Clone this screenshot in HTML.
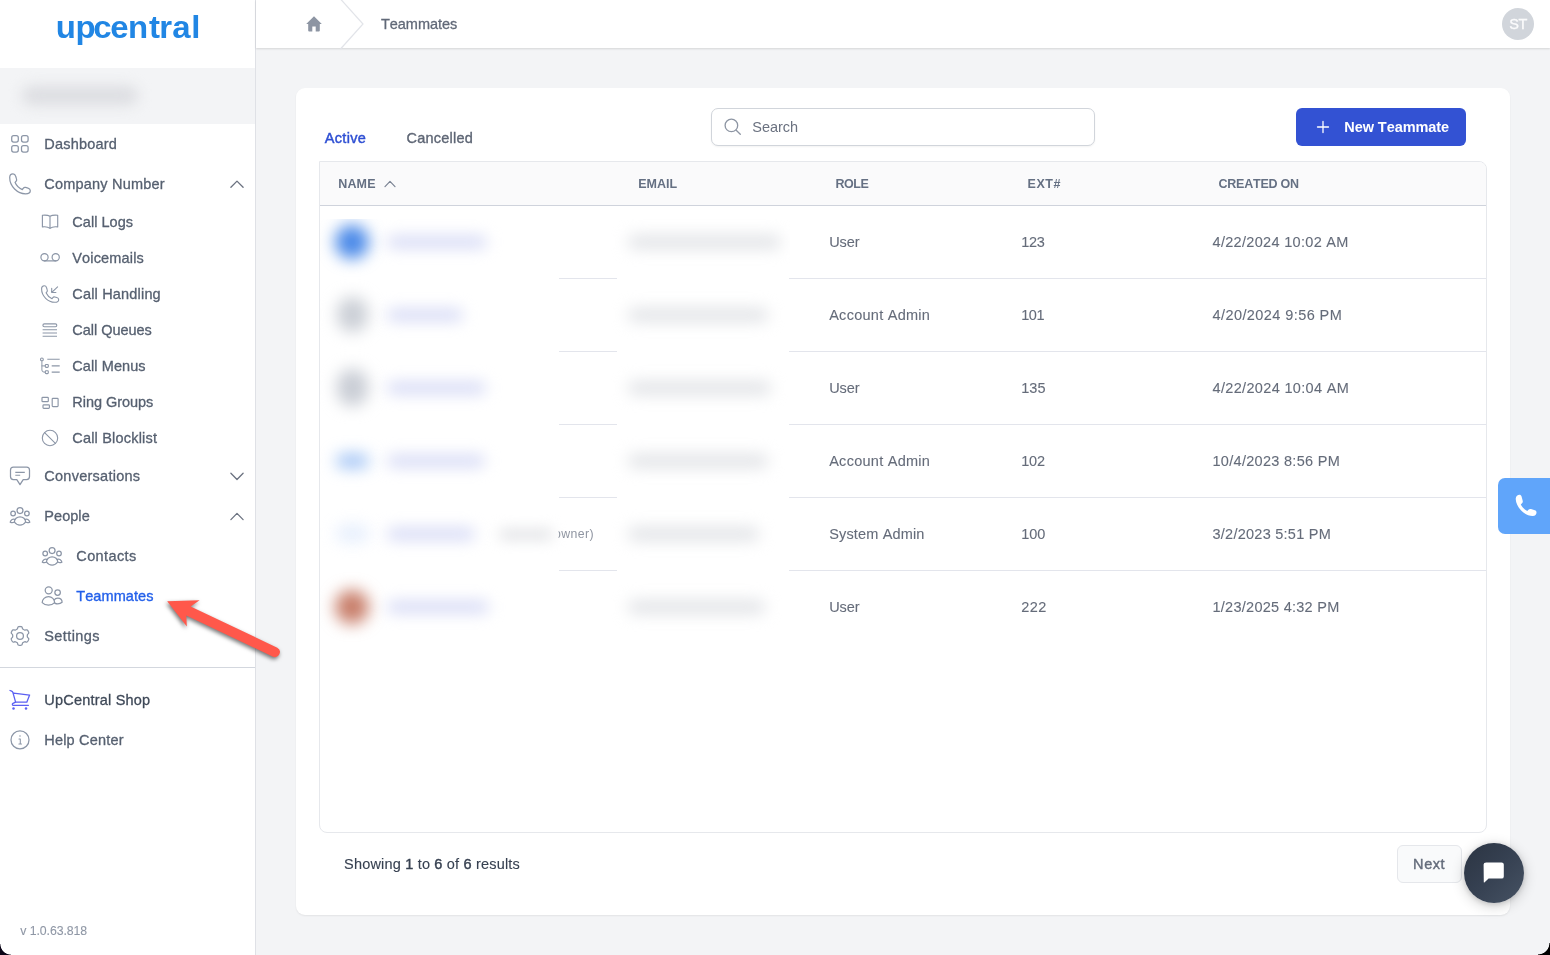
<!DOCTYPE html>
<html lang="en">
<head>
<meta charset="utf-8">
<title>Teammates - UpCentral</title>
<style>
*{box-sizing:border-box;margin:0;padding:0}
html,body{width:1550px;height:955px;overflow:hidden}
body{position:relative;background:#f3f4f6;font-family:"Liberation Sans",sans-serif;font-size:14px;color:#4b5563}
.t{font-kerning:none;position:absolute;white-space:nowrap;display:block;line-height:20px;opacity:.999}
#side{position:absolute;left:0;top:0;width:256px;height:955px;background:#fff;border-right:1px solid #dfe1e6}
#band{position:absolute;left:0;top:68px;width:255px;height:56px;background:#f3f4f6}
#sdiv{position:absolute;left:0;top:667px;width:255px;height:1px;background:#d3d7de}
#top{position:absolute;left:256px;top:0;width:1294px;height:48px;background:#fff;box-shadow:0 1px 2px rgba(0,0,0,.13)}
#card{position:absolute;left:296px;top:88px;width:1214px;height:827px;background:#fff;border-radius:9px;box-shadow:0 1px 2px rgba(0,0,0,.07)}
#tbl{position:absolute;left:319px;top:161px;width:1168px;height:672px;border:1px solid #e6e8ec;border-radius:0 8px 8px 8px;background:#fff;overflow:hidden}
#thead{position:absolute;left:0;top:0;width:100%;height:44px;background:#fafafb;border-bottom:1.4px solid #cfd3dc}
.rl{position:absolute;height:1px;background:#e3e5ec}
#search{position:absolute;left:711px;top:108px;width:384px;height:38px;border:1px solid #d1d5db;border-radius:7px;background:#fff;box-shadow:0 1px 2px rgba(0,0,0,.05)}
#btn{position:absolute;left:1296px;top:108px;width:170px;height:38px;border-radius:6px;background:#3352d3}
#next{position:absolute;left:1397px;top:845px;width:65px;height:38px;border:1px solid #e5e7eb;border-radius:6px;background:#f9fafb}
#chat{position:absolute;left:1464px;top:843px;width:60px;height:60px;border-radius:50%;background:linear-gradient(135deg,#2b3442 0%,#364152 50%,#465263 100%);box-shadow:0 3px 14px rgba(0,0,0,.2),0 1px 5px rgba(0,0,0,.14)}
#call{position:absolute;left:1498px;top:478px;width:52px;height:56px;border-radius:7px 0 0 7px;background:#60a5fa}
#ava{position:absolute;left:1502px;top:8px;width:32px;height:32px;border-radius:50%;background:#d1d5db}
.blur{position:absolute;border-radius:50%}
svg{position:absolute;overflow:visible}
.ic{fill:none;stroke:#8c96a7;stroke-width:1.25;stroke-linecap:round;stroke-linejoin:round}
.corner{position:absolute;width:12px;height:12px;bottom:0;background:#000}
.t b{font-weight:400;-webkit-text-stroke:.42px #374151}
a.t{text-decoration:none;cursor:pointer}
.redact{position:absolute;overflow:hidden}

</style>
</head>
<body>
<aside id="side">
  <svg id="logo" style="left:0;top:0;opacity:.999" width="255" height="60" viewBox="0 0 255 60"><text transform="scale(1.03,1)" x="54.21 73.32 90.65 107.04 124.24 144.57 154.71 167.23 185.62" y="38.1" font-family="Liberation Sans, sans-serif" font-weight="700" font-size="32" fill="#2186e4">upcentral</text></svg>
  <div id="band"><div class="blur" style="left:22px;top:18px;width:116px;height:19px;background:#dcdde1;filter:blur(7px);border-radius:9px"></div></div>
  <nav>
<svg style="left:0;top:0" width="256" height="955" viewBox="0 0 256 955"><rect class="ic" x="11.7" y="135.7" width="6.6" height="6.4" rx="2"/>
<rect class="ic" x="21.5" y="135.7" width="6.6" height="6.4" rx="2"/>
<rect class="ic" x="11.7" y="145.6" width="6.6" height="6.4" rx="2"/>
<rect class="ic" x="21.5" y="145.6" width="6.6" height="6.4" rx="2"/>
<g transform="translate(9,173)"><path class="ic" d="M4.0 0.9 C2.2 0.9 0.7 2.3 0.7 4.6 C0.7 9.0 2.6 13.1 5.6 16.0 C8.5 18.9 12.4 20.8 16.6 20.8 C19.4 20.8 21.3 19.6 21.3 17.7 C21.3 16.3 20.4 15.5 19.0 15.1 L16.6 14.4 C15.6 14.1 14.8 14.5 14.2 15.3 L13.3 16.6 C10.4 15.2 7.4 12.4 6.1 9.4 L6.9 8.5 C7.7 7.7 7.9 6.9 7.5 5.9 L6.6 3.0 C6.2 1.6 5.3 0.9 4.0 0.9 Z"/></g>
<path class="ic" d="M50 216.3 C48.2 215.1 45.2 214.9 42.4 215.2 V226.9 C45.2 226.5 48.2 226.9 50 228.4 C51.8 226.9 54.8 226.5 57.7 226.9 V215.2 C54.8 214.9 51.8 215.1 50 216.3 Z M50 216.3 V228.4" style="stroke-width:1.15"/>
<circle class="ic" cx="44.5" cy="257.3" r="3.6" style="stroke-width:1.2"/>
<circle class="ic" cx="55.7" cy="257.3" r="3.6" style="stroke-width:1.2"/>
<path class="ic" d="M44.5 260.9 H55.7" style="stroke-width:1.2"/>
<g transform="translate(41,285) scale(0.83)"><path class="ic" d="M4.0 0.9 C2.2 0.9 0.7 2.3 0.7 4.6 C0.7 9.0 2.6 13.1 5.6 16.0 C8.5 18.9 12.4 20.8 16.6 20.8 C19.4 20.8 21.3 19.6 21.3 17.7 C21.3 16.3 20.4 15.5 19.0 15.1 L16.6 14.4 C15.6 14.1 14.8 14.5 14.2 15.3 L13.3 16.6 C10.4 15.2 7.4 12.4 6.1 9.4 L6.9 8.5 C7.7 7.7 7.9 6.9 7.5 5.9 L6.6 3.0 C6.2 1.6 5.3 0.9 4.0 0.9 Z" style="stroke-width:1.35"/></g>
<path class="ic" d="M57.6 286.8 L51.8 292.4 M51.7 288.3 V292.5 H55.9" style="stroke-width:1.1"/>
<rect class="ic" x="42.9" y="323.9" width="13.9" height="2.9" rx="1.45" style="stroke-width:1.1"/>
<path class="ic" d="M42.6 329.7 H57 M42.6 333 H57 M42.6 336.2 H57" style="stroke-width:1.1;stroke-linecap:butt"/>
<circle class="ic" cx="41.9" cy="359.4" r="1.4" style="stroke-width:1.1"/>
<path class="ic" d="M41.9 360.8 V370 Q41.9 372.1 44 372.1 H45.2 M41.9 365.9 H45.2" style="stroke-width:1"/>
<rect class="ic" x="45.3" y="364.5" width="3" height="2.9" rx="0.8" style="stroke-width:1.1"/>
<rect class="ic" x="45.3" y="370.7" width="3" height="2.9" rx="0.8" style="stroke-width:1.1"/>
<path class="ic" d="M47.3 359.3 H59.7 M51.7 365.9 H59.7 M51.7 372.1 H59.7" style="stroke-width:1.1;stroke-linecap:butt"/>
<rect class="ic" x="42" y="397.3" width="6.3" height="4.4" rx="0.8" style="stroke-width:1.15"/>
<rect class="ic" x="43" y="404.8" width="6.4" height="3.5" rx="0.8" style="stroke-width:1.15"/>
<rect class="ic" x="52.2" y="398.3" width="5.9" height="8.3" rx="0.8" style="stroke-width:1.15"/>
<circle class="ic" cx="50" cy="438" r="7.7" style="stroke-width:1.1"/>
<path class="ic" d="M44.6 432.6 L55.4 443.4" style="stroke-width:1.1"/>
<path class="ic" d="M13.4 467.2 H26.6 C28.6 467.2 29.5 468.1 29.5 470.1 V476.6 C29.5 478.6 28.6 479.6 26.6 479.6 H23.2 L20 484.7 L16.8 479.6 H13.4 C11.4 479.6 10.5 478.6 10.5 476.6 V470.1 C10.5 468.1 11.4 467.2 13.4 467.2 Z"/>
<path class="ic" d="M15.3 472.4 H24.8 M15.3 475.2 H20.2" style="stroke-width:1.1;stroke-linecap:butt"/>
<circle class="ic" cx="20.0" cy="510.6" r="2.95"/><circle class="ic" cx="13.1" cy="513.5" r="2.3"/><circle class="ic" cx="26.9" cy="513.5" r="2.3"/><path class="ic" d="M14.4 522.0 C14.4 519.0 16.9 516.8 20.0 516.8 C23.1 516.8 25.6 519.0 25.6 522.0 C24.1 524.2 22.1 525.1 20.0 525.1 C17.9 525.1 15.9 524.2 14.4 522.0 Z"/><path class="ic" d="M14.7 519.4 C13.1 518.6 10.9 519.6 10.2 522.2 C11.7 522.9 13.2 522.8 14.4 522.0"/><path class="ic" d="M25.3 519.4 C26.9 518.6 29.1 519.6 29.8 522.2 C28.3 522.9 26.8 522.8 25.6 522.0"/>
<circle class="ic" cx="52.1" cy="550.6" r="2.95"/><circle class="ic" cx="45.2" cy="553.5" r="2.3"/><circle class="ic" cx="59.0" cy="553.5" r="2.3"/><path class="ic" d="M46.5 562.0 C46.5 559.0 49.0 556.8 52.1 556.8 C55.2 556.8 57.7 559.0 57.7 562.0 C56.2 564.2 54.2 565.1 52.1 565.1 C50.0 565.1 48.0 564.2 46.5 562.0 Z"/><path class="ic" d="M46.800000000000004 559.4 C45.2 558.6 43.0 559.6 42.300000000000004 562.2 C43.800000000000004 562.9 45.300000000000004 562.8 46.5 562.0"/><path class="ic" d="M57.400000000000006 559.4 C59.0 558.6 61.2 559.6 61.900000000000006 562.2 C60.400000000000006 562.9 58.900000000000006 562.8 57.7 562.0"/>
<circle class="ic" cx="48.7" cy="590.3" r="3.5"/>
<circle class="ic" cx="57.6" cy="592.5" r="2.75"/>
<path class="ic" d="M42.2 602.6 C42.2 599.2 45 596.7 48.5 596.7 C52 596.7 54.6 599.2 54.6 602.6 C53 604.3 50.8 605 48.5 605 C46 605 43.8 604.3 42.2 602.6 Z"/>
<path class="ic" d="M54.2 600 C54.8 598.8 56.2 598 57.8 598 C60.3 598 62.1 599.8 62.1 602.3 C60.9 603.4 59.4 603.9 57.8 603.9 C56.6 603.9 55.6 603.6 54.7 603.1"/>
<path class="ic" d="M20.00 626.49 L20.61 626.52 L21.22 626.60 L21.81 626.81 L22.24 627.52 L22.48 628.59 L22.83 629.08 L23.24 629.33 L23.65 629.57 L24.07 629.81 L24.50 630.04 L25.09 630.10 L26.13 629.77 L26.97 629.79 L27.44 630.19 L27.82 630.68 L28.15 631.20 L28.43 631.74 L28.67 632.31 L28.77 632.92 L28.38 633.66 L27.57 634.39 L27.32 634.94 L27.30 635.42 L27.31 635.90 L27.30 636.38 L27.32 636.86 L27.57 637.41 L28.38 638.14 L28.77 638.88 L28.67 639.49 L28.43 640.06 L28.15 640.60 L27.82 641.12 L27.44 641.61 L26.97 642.01 L26.13 642.03 L25.09 641.70 L24.50 641.76 L24.07 641.99 L23.65 642.23 L23.24 642.47 L22.83 642.72 L22.48 643.21 L22.24 644.28 L21.81 644.99 L21.22 645.20 L20.61 645.28 L20.00 645.31 L19.39 645.28 L18.78 645.20 L18.19 644.99 L17.76 644.28 L17.52 643.21 L17.17 642.72 L16.76 642.47 L16.35 642.23 L15.93 641.99 L15.50 641.76 L14.91 641.70 L13.87 642.03 L13.03 642.01 L12.56 641.61 L12.18 641.12 L11.85 640.60 L11.57 640.06 L11.33 639.49 L11.23 638.88 L11.62 638.14 L12.43 637.41 L12.68 636.86 L12.70 636.38 L12.69 635.90 L12.70 635.42 L12.68 634.94 L12.43 634.39 L11.62 633.66 L11.23 632.92 L11.33 632.31 L11.57 631.74 L11.85 631.20 L12.18 630.68 L12.56 630.19 L13.03 629.79 L13.87 629.77 L14.91 630.10 L15.50 630.04 L15.93 629.81 L16.35 629.57 L16.76 629.33 L17.17 629.08 L17.52 628.59 L17.76 627.52 L18.19 626.81 L18.78 626.60 L19.39 626.52 L20.00 626.49 Z"/>
<circle class="ic" cx="20" cy="635.9" r="3.4"/>
<path class="ic" d="M10 690.5 L11.6 691.1 C12.4 691.4 12.8 691.9 13 692.8 L15.6 702.2 H26.8 L29.6 695.1 L13.6 693.1" style="stroke:#5c60f2;stroke-width:1.3"/>
<path class="ic" d="M15.6 702.2 L13 703.4 C12 703.9 12.2 705.3 13.4 705.3 H28.4" style="stroke:#5c60f2;stroke-width:1.3"/>
<circle class="ic" cx="13.5" cy="708.4" r="1.25" style="stroke:none;fill:#5c60f2"/>
<circle class="ic" cx="26" cy="708.4" r="1.25" style="stroke:none;fill:#5c60f2"/>
<circle class="ic" cx="20" cy="739.9" r="9"/>
<circle class="ic" cx="20" cy="736.1" r="0.75" style="stroke:none;fill:#8c96a7"/>
<path class="ic" d="M19 738.9 H20.3 V743.7 M18.9 743.9 H21.5" style="stroke-width:1.05"/>
<path class="ic" d="M230.9 187.3 L237 181.1 L243.1 187.3" style="stroke:#6b7280;stroke-width:1.3"/>
<path class="ic" d="M230.9 473.3 L237 479.5 L243.1 473.3" style="stroke:#6b7280;stroke-width:1.3"/>
<path class="ic" d="M230.9 519.6 L237 513.4 L243.1 519.6" style="stroke:#6b7280;stroke-width:1.3"/></svg>
<a class="t" style="left:44.3px;top:134px;font-size:14.5px;color:#566070;letter-spacing:0.194px;-webkit-text-stroke:0.3px #566070;">Dashboard</a>
<a class="t" style="left:44.3px;top:174px;font-size:14.5px;color:#566070;letter-spacing:0.203px;-webkit-text-stroke:0.3px #566070;">Company Number</a>
<a class="t" style="left:72.3px;top:212px;font-size:14.5px;color:#566070;letter-spacing:0.041px;-webkit-text-stroke:0.3px #566070;">Call Logs</a>
<a class="t" style="left:72.3px;top:248px;font-size:14.5px;color:#566070;letter-spacing:0.152px;-webkit-text-stroke:0.3px #566070;">Voicemails</a>
<a class="t" style="left:72.3px;top:284px;font-size:14.5px;color:#566070;letter-spacing:0.179px;-webkit-text-stroke:0.3px #566070;">Call Handling</a>
<a class="t" style="left:72.3px;top:320px;font-size:14.5px;color:#566070;letter-spacing:-0.022px;-webkit-text-stroke:0.3px #566070;">Call Queues</a>
<a class="t" style="left:72.3px;top:356px;font-size:14.5px;color:#566070;letter-spacing:0.083px;-webkit-text-stroke:0.3px #566070;">Call Menus</a>
<a class="t" style="left:72.3px;top:392px;font-size:14.5px;color:#566070;letter-spacing:-0.043px;-webkit-text-stroke:0.3px #566070;">Ring Groups</a>
<a class="t" style="left:72.3px;top:428px;font-size:14.5px;color:#566070;letter-spacing:0.190px;-webkit-text-stroke:0.3px #566070;">Call Blocklist</a>
<a class="t" style="left:44.3px;top:466px;font-size:14.5px;color:#566070;letter-spacing:0.257px;-webkit-text-stroke:0.3px #566070;">Conversations</a>
<a class="t" style="left:44.3px;top:506px;font-size:14.5px;color:#566070;letter-spacing:0.049px;-webkit-text-stroke:0.3px #566070;">People</a>
<a class="t" style="left:76.3px;top:546px;font-size:14.5px;color:#566070;letter-spacing:0.393px;-webkit-text-stroke:0.3px #566070;">Contacts</a>
<a class="t" style="left:76.3px;top:586px;font-size:14.5px;color:#2360ea;letter-spacing:0.075px;-webkit-text-stroke:0.35px #2360ea;">Teammates</a>
<a class="t" style="left:44.3px;top:626px;font-size:14.5px;color:#566070;letter-spacing:0.397px;-webkit-text-stroke:0.3px #566070;">Settings</a>
<a class="t" style="left:44.3px;top:690px;font-size:14.5px;color:#3f4958;letter-spacing:0.207px;-webkit-text-stroke:0.3px #3f4958;">UpCentral Shop</a>
<a class="t" style="left:44.3px;top:730px;font-size:14.5px;color:#566070;letter-spacing:0.182px;-webkit-text-stroke:0.3px #566070;">Help Center</a>
  </nav>
  <div id="sdiv"></div>
<span class="t" style="left:20.3px;top:921px;font-size:12.3px;color:#8f97a5;letter-spacing:-0.075px;-webkit-text-stroke:0.1px #8f97a5;">v 1.0.63.818</span>
</aside>
<header>
  <div id="top">
    <svg style="left:84px;top:0" width="26" height="48" viewBox="0 0 26 48"><path d="M0.5 -1 L23 24 L0.5 49" fill="none" stroke="#e2e4e9" stroke-width="1.2"/></svg>
    <svg style="left:50px;top:16px" width="16" height="16" viewBox="0 0 16 16"><path d="M8 0.3 L0.2 8.1 H2.2 V14.6 Q2.2 15.6 3.2 15.6 H6.3 V10.6 H9.7 V15.6 H12.8 Q13.8 15.6 13.8 14.6 V8.1 H15.8 Z" fill="#8d95a3"/></svg>
  </div>
<span class="t" style="left:380.9px;top:14px;font-size:14.5px;color:#616978;letter-spacing:-0.009px;-webkit-text-stroke:0.3px #616978;">Teammates</span>
  <div id="ava"></div>
<span class="t" style="left:1509.2px;top:14px;font-size:14.5px;color:#fbfbfc;letter-spacing:-0.400px;-webkit-text-stroke:0.3px #fbfbfc;">ST</span>
</header>
<main>
  <section id="card"></section>
  <div class="tabs">
<a class="t" style="left:324.7px;top:128px;font-size:14.5px;color:#2e4fd3;letter-spacing:0.347px;-webkit-text-stroke:0.45px #2e4fd3;">Active</a>
<a class="t" style="left:406.6px;top:128px;font-size:14.5px;color:#5e6675;letter-spacing:0.222px;-webkit-text-stroke:0.35px #5e6675;">Cancelled</a>
  </div>
  <div id="search">
    <svg style="left:11.2px;top:8.2px" width="20" height="20" viewBox="0 0 20 20"><circle cx="8.4" cy="8.4" r="6.3" class="ic" style="stroke:#8d95a3;stroke-width:1.3"/><path d="M13.2 13.2 L17.3 17.3" class="ic" style="stroke:#8d95a3;stroke-width:1.3"/></svg>
  </div>
<span class="t" style="left:752.3px;top:117px;font-size:14.5px;color:#6b7280;letter-spacing:-0.040px;">Search</span>
  <div id="btn">
    <svg style="left:21px;top:13px" width="12" height="12" viewBox="0 0 12 12"><path d="M6 0.5 V11.5 M0.5 6 H11.5" stroke="#fff" stroke-width="1.3" fill="none" stroke-linecap="round"/></svg>
  </div>
<span class="t" style="left:1344.3px;top:117px;font-size:14.5px;color:#ffffff;font-weight:700;letter-spacing:-0.070px;">New Teammate</span>
  <div id="tbl"><div id="thead"></div></div>
  <div class="thead">
<span class="t" style="left:338.3px;top:174px;font-size:12.5px;color:#657083;font-weight:700;letter-spacing:0.128px;">NAME</span>
<span class="t" style="left:638.2px;top:174px;font-size:12.5px;color:#657083;font-weight:700;">EMAIL</span>
<span class="t" style="left:835.4px;top:174px;font-size:12.5px;color:#657083;font-weight:700;letter-spacing:-0.400px;">ROLE</span>
<span class="t" style="left:1027.6px;top:174px;font-size:12.5px;color:#657083;font-weight:700;letter-spacing:0.513px;">EXT#</span>
<span class="t" style="left:1218.5px;top:174px;font-size:12.5px;color:#657083;font-weight:700;letter-spacing:-0.233px;">CREATED ON</span>
    <svg style="left:384px;top:180px" width="12" height="8" viewBox="0 0 12 8"><path d="M1 6.6 L6 1.4 L11 6.6" fill="none" stroke="#7b8494" stroke-width="1.2" stroke-linecap="round" stroke-linejoin="round"/></svg>
  </div>
  <div class="tbody">
<div class="rl" style="left:559px;top:278px;width:58px"></div>
<div class="rl" style="left:789px;top:278px;width:697px"></div>
<div class="rl" style="left:559px;top:351px;width:58px"></div>
<div class="rl" style="left:789px;top:351px;width:697px"></div>
<div class="rl" style="left:559px;top:424px;width:58px"></div>
<div class="rl" style="left:789px;top:424px;width:697px"></div>
<div class="rl" style="left:559px;top:497px;width:58px"></div>
<div class="rl" style="left:789px;top:497px;width:697px"></div>
<div class="rl" style="left:559px;top:570px;width:58px"></div>
<div class="rl" style="left:789px;top:570px;width:697px"></div>
<div class="redact" style="left:320px;top:219px;width:470px;height:440px"><div class="blur" style="left:15px;top:5.7px;width:34px;height:34px;background:#4a89e8;filter:blur(8px);border-radius:17.0px"></div>
<div class="blur" style="left:67px;top:17px;width:100px;height:12px;background:#d5d9f5;filter:blur(7.5px);border-radius:6.0px"></div>
<div class="blur" style="left:308px;top:17px;width:153px;height:12px;background:#dddfe3;filter:blur(8px);border-radius:6.0px"></div>
<div class="blur" style="left:16.5px;top:78.2px;width:31px;height:35px;background:#cbcfd6;filter:blur(8px);border-radius:17.5px"></div>
<div class="blur" style="left:67px;top:90px;width:76px;height:12px;background:#d5d9f5;filter:blur(7.5px);border-radius:6.0px"></div>
<div class="blur" style="left:308px;top:90px;width:140px;height:12px;background:#dddfe3;filter:blur(8px);border-radius:6.0px"></div>
<div class="blur" style="left:16.5px;top:150.2px;width:31px;height:37px;background:#c9cdd5;filter:blur(8px);border-radius:18.5px"></div>
<div class="blur" style="left:67px;top:163px;width:99px;height:12px;background:#d5d9f5;filter:blur(7.5px);border-radius:6.0px"></div>
<div class="blur" style="left:308px;top:163px;width:143px;height:12px;background:#dddfe3;filter:blur(8px);border-radius:6.0px"></div>
<div class="blur" style="left:15.5px;top:234.7px;width:33px;height:14px;background:#9fc2f5;filter:blur(8px);border-radius:7.0px"></div>
<div class="blur" style="left:67px;top:236px;width:98px;height:12px;background:#d5d9f5;filter:blur(7.5px);border-radius:6.0px"></div>
<div class="blur" style="left:308px;top:236px;width:140px;height:12px;background:#dddfe3;filter:blur(8px);border-radius:6.0px"></div>
<div class="blur" style="left:15.5px;top:306.2px;width:33px;height:17px;background:#dfeafc;filter:blur(8px);border-radius:8.5px;opacity:0.8"></div>
<div class="blur" style="left:67px;top:309px;width:88px;height:12px;background:#d5d9f5;filter:blur(7.5px);border-radius:6.0px"></div>
<div class="blur" style="left:308px;top:309px;width:131px;height:12px;background:#dddfe3;filter:blur(8px);border-radius:6.0px"></div>
<div class="blur" style="left:15px;top:370.7px;width:34px;height:34px;background:#c87e6a;filter:blur(8px);border-radius:17.0px"></div>
<div class="blur" style="left:67px;top:382px;width:102px;height:12px;background:#d5d9f5;filter:blur(7.5px);border-radius:6.0px"></div>
<div class="blur" style="left:308px;top:382px;width:137px;height:12px;background:#dddfe3;filter:blur(8px);border-radius:6.0px"></div>
<div class="blur" style="left:179px;top:309.5px;width:54px;height:11px;background:#e2e3e6;filter:blur(7px);border-radius:5.5px"></div></div>
<span class="t" style="left:829.2px;top:232px;font-size:14.5px;color:#656c7a;letter-spacing:-0.041px;-webkit-text-stroke:0.1px #656c7a;">User</span>
<span class="t" style="left:1021.2px;top:232px;font-size:14.5px;color:#656c7a;letter-spacing:-0.253px;-webkit-text-stroke:0.1px #656c7a;">123</span>
<span class="t" style="left:1212.5px;top:232px;font-size:14.5px;color:#656c7a;letter-spacing:0.314px;-webkit-text-stroke:0.1px #656c7a;">4/22/2024 10:02 AM</span>
<span class="t" style="left:829.2px;top:305px;font-size:14.5px;color:#656c7a;letter-spacing:0.264px;-webkit-text-stroke:0.1px #656c7a;">Account Admin</span>
<span class="t" style="left:1021.2px;top:305px;font-size:14.5px;color:#656c7a;letter-spacing:-0.400px;-webkit-text-stroke:0.1px #656c7a;">101</span>
<span class="t" style="left:1212.5px;top:305px;font-size:14.5px;color:#656c7a;letter-spacing:0.419px;-webkit-text-stroke:0.1px #656c7a;">4/20/2024 9:56 PM</span>
<span class="t" style="left:829.2px;top:378px;font-size:14.5px;color:#656c7a;letter-spacing:-0.041px;-webkit-text-stroke:0.1px #656c7a;">User</span>
<span class="t" style="left:1021.2px;top:378px;font-size:14.5px;color:#656c7a;letter-spacing:0.033px;-webkit-text-stroke:0.1px #656c7a;">135</span>
<span class="t" style="left:1212.5px;top:378px;font-size:14.5px;color:#656c7a;letter-spacing:0.338px;-webkit-text-stroke:0.1px #656c7a;">4/22/2024 10:04 AM</span>
<span class="t" style="left:829.2px;top:451px;font-size:14.5px;color:#656c7a;letter-spacing:0.264px;-webkit-text-stroke:0.1px #656c7a;">Account Admin</span>
<span class="t" style="left:1021.2px;top:451px;font-size:14.5px;color:#656c7a;letter-spacing:-0.207px;-webkit-text-stroke:0.1px #656c7a;">102</span>
<span class="t" style="left:1212.5px;top:451px;font-size:14.5px;color:#656c7a;letter-spacing:0.294px;-webkit-text-stroke:0.1px #656c7a;">10/4/2023 8:56 PM</span>
<span class="t" style="left:554.0px;top:524px;font-size:12.3px;color:#9096a2;letter-spacing:0.413px;clip-path:inset(0 0 0 4.5px);">owner)</span>
<span class="t" style="left:829.2px;top:524px;font-size:14.5px;color:#656c7a;letter-spacing:0.156px;-webkit-text-stroke:0.1px #656c7a;">System Admin</span>
<span class="t" style="left:1021.2px;top:524px;font-size:14.5px;color:#656c7a;letter-spacing:0.012px;-webkit-text-stroke:0.1px #656c7a;">100</span>
<span class="t" style="left:1212.5px;top:524px;font-size:14.5px;color:#656c7a;letter-spacing:0.251px;-webkit-text-stroke:0.1px #656c7a;">3/2/2023 5:51 PM</span>
<span class="t" style="left:829.2px;top:597px;font-size:14.5px;color:#656c7a;letter-spacing:-0.041px;-webkit-text-stroke:0.1px #656c7a;">User</span>
<span class="t" style="left:1021.2px;top:597px;font-size:14.5px;color:#656c7a;letter-spacing:0.493px;-webkit-text-stroke:0.1px #656c7a;">222</span>
<span class="t" style="left:1212.5px;top:597px;font-size:14.5px;color:#656c7a;letter-spacing:0.263px;-webkit-text-stroke:0.1px #656c7a;">1/23/2025 4:32 PM</span>
  </div>
  <footer>
<span class="t" style="left:344.1px;top:854px;font-size:14.5px;color:#374151;letter-spacing:0.184px;-webkit-text-stroke:0.12px #374151;">Showing <b>1</b> to <b>6</b> of <b>6</b> results</span>
    <div id="next"></div>
<span class="t" style="left:1413.1px;top:854px;font-size:14.5px;color:#646c7b;letter-spacing:0.564px;-webkit-text-stroke:0.4px #646c7b;">Next</span>
  </footer>
</main>
<div id="call">
  <svg style="left:13.6px;top:14.2px" width="27" height="27" viewBox="0 0 24 24"><path d="M6.6 2.4 C5.2 2.4 3.2 3.6 3.3 6.2 C3.5 10.2 5.6 14 8.6 16.9 C11.3 19.5 14.9 21.3 18.4 21.4 C20.6 21.4 21.8 19.6 21.8 18.2 C21.8 17.3 21.2 16.6 20.3 16.3 L16.9 15.2 C16 14.9 15.2 15.2 14.6 15.8 L13.6 16.9 C11.2 15.7 9 13.5 7.8 11.1 L8.9 10.1 C9.5 9.5 9.8 8.7 9.5 7.8 L8.5 4 C8.2 3 7.5 2.4 6.6 2.4 Z" fill="#fff"/></svg>
</div>
<div id="chat">
  <svg style="left:19.4px;top:19.4px" width="22" height="21" viewBox="0 0 22 21"><path d="M3.2 0.4 H18.6 Q20.8 0.4 20.8 2.6 V14.4 Q20.8 16.6 18.6 16.6 H5.6 L1.4 20.4 Q0.8 20.9 0.8 20 L0.6 2.6 Q0.6 0.4 3.2 0.4 Z" fill="#fff"/></svg>
</div>
<svg style="left:150px;top:585px;filter:drop-shadow(-1px 2px 2px rgba(0,0,0,.55))" width="150" height="90" viewBox="150 585 150 90"><path d="M167.2 601.3 L199.6 600.2 L190.6 606.4 L277.3 647.7 A5 5 0 0 1 273 656.7 L186.3 615.6 L186.8 626.4 Z" fill="#ff584b"/></svg>
<div class="corner" style="left:0;width:11px;height:11px;background:#0c0618;-webkit-mask:radial-gradient(circle at 100% 0,transparent 10.2px,#000 11px);mask:radial-gradient(circle at 100% 0,transparent 10.2px,#000 11px)"></div>
<div class="corner" style="right:0;-webkit-mask:radial-gradient(circle at 0 0,transparent 11px,#000 11.8px);mask:radial-gradient(circle at 0 0,transparent 11px,#000 11.8px)"></div>

</body>
</html>
